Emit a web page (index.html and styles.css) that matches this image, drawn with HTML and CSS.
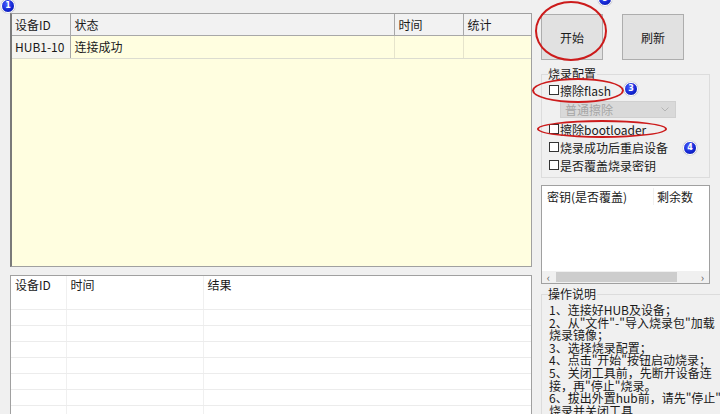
FILE: index.html
```html
<!DOCTYPE html>
<html lang="zh-CN">
  <head>
    <meta charset="UTF-8" />
    <meta name="viewport" content="width=device-width, initial-scale=1.0" />
    <title>烧录工具</title>
    <link rel="stylesheet" href="styles.css">
  </head>
  <body>
    <div class="window">
      <div class="left">
        <div class="grid device-grid">
          <table>
            <colgroup>
              <col style="width: 58px" />
              <col style="width: 324px" />
              <col style="width: 69px" />
              <col />
            </colgroup>
            <thead>
              <tr>
                <th>设备ID</th>
                <th>状态</th>
                <th>时间</th>
                <th>统计</th>
              </tr>
            </thead>
            <tbody>
              <tr>
                <td>HUB1-10</td>
                <td>连接成功</td>
                <td></td>
                <td></td>
              </tr>
            </tbody>
          </table>
        </div>

        <div class="grid log-grid">
          <table>
            <colgroup>
              <col style="width: 55px" />
              <col style="width: 137px" />
              <col />
            </colgroup>
            <thead>
              <tr>
                <th>设备ID</th>
                <th>时间</th>
                <th>结果</th>
              </tr>
            </thead>
            <tbody>
              <tr><td></td><td></td><td></td></tr>
              <tr><td></td><td></td><td></td></tr>
              <tr><td></td><td></td><td></td></tr>
              <tr><td></td><td></td><td></td></tr>
              <tr><td></td><td></td><td></td></tr>
              <tr><td></td><td></td><td></td></tr>
              <tr><td></td><td></td><td></td></tr>
              <tr><td></td><td></td><td></td></tr>
            </tbody>
          </table>
        </div>
      </div>

      <div class="right">
        <div class="actions">
          <button class="btn">开始</button>
          <button class="btn">刷新</button>
        </div>

        <fieldset class="group config">
          <legend>烧录配置</legend>
          <label class="check"><span class="box"></span>擦除flash</label>
          <div class="combo">
            <span>普通擦除</span>
            <svg width="8" height="5" viewBox="0 0 8 5">
              <path d="M0.5 0.5 L4 4 L7.5 0.5" fill="none" stroke="#b4b4b4" stroke-width="1" />
            </svg>
          </div>
          <label class="check"><span class="box"></span>擦除bootloader</label>
          <label class="check"><span class="box"></span>烧录成功后重启设备</label>
          <label class="check"><span class="box"></span>是否覆盖烧录密钥</label>
        </fieldset>

        <div class="key-list">
          <div class="key-head">
            <span class="key-name">密钥(是否覆盖)</span>
            <span class="key-count">剩余数</span>
          </div>
          <div class="key-body"></div>
          <div class="hscroll">
            <span class="arrow">&lsaquo;</span>
            <span class="thumb"></span>
            <span class="arrow">&rsaquo;</span>
          </div>
        </div>

        <fieldset class="group help">
          <legend>操作说明</legend>
          <div class="line">1、连接好HUB及设备；</div>
          <div class="line">2、从"文件"-"导入烧录包"加载</div>
          <div class="line">烧录镜像；</div>
          <div class="line">3、选择烧录配置；</div>
          <div class="line">4、点击"开始"按钮启动烧录；</div>
          <div class="line">5、关闭工具前，先断开设备连</div>
          <div class="line">接，再"停止"烧录。</div>
          <div class="line">6、拔出外置hub前，请先"停止"</div>
          <div class="line">烧录并关闭工具</div>
        </fieldset>
      </div>

      <!-- annotation marks drawn over the window -->
      <span class="badge badge-1">1</span>
      <span class="badge badge-5">5</span>
      <span class="badge badge-3">3</span>
      <span class="badge badge-4">4</span>
      <span class="ring ring-start"></span>
      <span class="ring ring-flash"></span>
      <span class="ring ring-boot"></span>
    </div>
  </body>
</html>
```

FILE: styles.css
```css
* {
  box-sizing: border-box;
}
body {
  margin: 0;
  background: #f0f0f0;
  font-family: "Noto Sans CJK SC", "Microsoft YaHei", sans-serif;
  font-size: 12px;
  color: #1a1a1a;
}
.window {
  position: relative;
  width: 720px;
  height: 414px;
  overflow: hidden;
  display: flex;
  align-items: flex-start;
  padding: 13px 0 0 10px;
  background: #f0f0f0;
}
.left {
  width: 522px;
  display: flex;
  flex-direction: column;
  gap: 8px;
}
.left > *,
.right > * {
  flex-shrink: 0;
}
.grid {
  border: 1px solid #a0a0a0;
  overflow: hidden;
}
.grid table {
  width: 100%;
  border-collapse: collapse;
  table-layout: fixed;
}
.grid th,
.grid td {
  font-weight: normal;
  text-align: left;
  padding: 0 4px;
  white-space: nowrap;
}
.device-grid {
  height: 254px;
  background: #fffee0;
  border-left: 2px solid #7a7a7a;
}
.device-grid th {
  height: 21px;
  padding-top: 1px;
  background: #f2f2f2;
  border-right: 1px solid #a8a8a8;
  border-bottom: 1px solid #a8a8a8;
}
.device-grid th:first-child {
  padding-left: 3px;
}
.device-grid th:last-child {
  border-right: none;
}
.device-grid td {
  height: 23px;
  border-right: 1px solid #e6e4cc;
  border-bottom: 1px solid #dcdcd0;
}
.device-grid td:first-child {
  background: #f4f4f0;
  border-right: 1px solid #a8a8a8;
  padding-left: 3px;
}
.device-grid td:last-child {
  border-right: none;
}
.log-grid {
  height: 150px;
  background: #ffffff;
}
.log-grid th {
  height: 17px;
  padding-top: 0;
  border-right: 1px solid #f0f0f0;
}
.log-grid td {
  height: 16px;
  border-right: 1px solid #f0f0f0;
  border-bottom: 1px solid #ececec;
}
.log-grid th:last-child,
.log-grid td:last-child {
  border-right: none;
}

.right {
  width: 169px;
  margin-left: 9px;
  display: flex;
  flex-direction: column;
}
.actions {
  display: flex;
  gap: 19px;
  margin-top: 1px;
}
.btn {
  width: 62px;
  height: 46px;
  background: #e1e1e1;
  border: 1px solid #adadad;
  font-family: inherit;
  font-size: 12px;
  color: #1a1a1a;
  padding: 0;
}
.group {
  margin: 0;
  border: 1px solid #dcdcdc;
  padding: 0 6px 3px 7px;
}
.group legend {
  padding: 0 1px 0 0;
  margin-left: -1px;
  line-height: 14px;
}
.config {
  margin-top: 7px;
}
.check {
  display: flex;
  align-items: center;
  height: 18px;
  white-space: nowrap;
}
.box {
  width: 10px;
  height: 10px;
  border: 1px solid #333333;
  background: #ffffff;
  margin-right: 1px;
}
.combo {
  display: flex;
  align-items: center;
  justify-content: space-between;
  width: 116px;
  height: 17px;
  margin: 2px 0 2px 11px;
  padding: 0 6px 0 4px;
  background: #d9d9d9;
  border: 1px solid #d0d0d0;
  color: #a6a6a6;
}
.key-list {
  margin-top: 7px;
  height: 99px;
  background: #ffffff;
  border: 1px solid #a0a0a0;
  display: flex;
  flex-direction: column;
}
.key-head {
  display: flex;
  height: 20px;
  align-items: center;
}
.key-name {
  width: 112px;
  padding-left: 5px;
  border-right: 1px solid #f0f0f0;
}
.key-count {
  padding-left: 3px;
}
.key-body {
  flex: 1;
}
.hscroll {
  display: flex;
  align-items: center;
  height: 12px;
  background: #f0f0f0;
  padding: 0 2px;
  color: #606060;
  font-size: 11px;
  line-height: 12px;
}
.arrow {
  width: 9px;
  text-align: center;
}
.thumb {
  width: 121px;
  height: 10px;
  margin: 0 1px 0 3px;
  background: #cdcdcd;
}
.hscroll .arrow:last-child {
  margin-left: auto;
}
.help {
  margin-top: 3px;
  padding-top: 3px;
  height: 140px;
}
.help .line {
  line-height: 12.6px;
  white-space: nowrap;
}

.badge {
  position: absolute;
  width: 14px;
  height: 14px;
  border-radius: 50%;
  background: radial-gradient(circle at 40% 35%, #4a5cff 0%, #1024d0 60%, #08128a 100%);
  border: 1.5px solid #ffffff;
  box-shadow: 0 0 1px #555577;
  color: #ffffff;
  font-family: "DejaVu Sans", sans-serif;
  font-weight: bold;
  font-size: 8px;
  line-height: 11px;
  text-align: center;
}
.badge-1 {
  left: 1px;
  top: -1px;
}
.badge-5 {
  left: 598px;
  top: -8px;
}
.badge-3 {
  left: 624px;
  top: 82px;
}
.badge-4 {
  left: 683px;
  top: 141px;
}
.ring {
  position: absolute;
  border: 2px solid #cc1b1b;
  border-radius: 50%;
}
.ring-start {
  left: 535px;
  top: 1px;
  width: 72px;
  height: 60px;
}
.ring-flash {
  left: 532px;
  top: 78px;
  width: 92px;
  height: 25px;
}
.ring-boot {
  left: 537px;
  top: 120px;
  width: 130px;
  height: 18px;
}
```
